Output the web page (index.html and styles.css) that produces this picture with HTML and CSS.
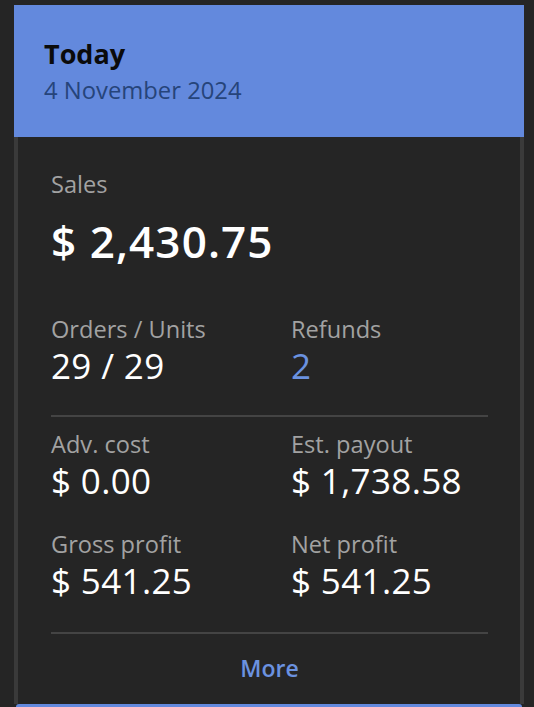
FILE: index.html
```html
<!DOCTYPE html>
<html lang="en">
<head>
<meta charset="utf-8">
<title>Today</title>
<link rel="stylesheet" href="styles.css">
</head>
<body>
<div class="list">
  <section class="card">
    <header class="card-head">
      <div class="title">Today</div>
      <div class="date">4 November 2024</div>
    </header>
    <div class="card-body">
      <div class="label">Sales</div>
      <div class="big">$ 2,430.75</div>
      <div class="grid first">
        <div class="stat">
          <div class="label">Orders / Units</div>
          <div class="value">29 / 29</div>
        </div>
        <div class="stat">
          <div class="label">Refunds</div>
          <div class="value link">2</div>
        </div>
      </div>
      <div class="divider"></div>
      <div class="grid second">
        <div class="stat">
          <div class="label">Adv. cost</div>
          <div class="value">$ 0.00</div>
        </div>
        <div class="stat">
          <div class="label">Est. payout</div>
          <div class="value">$ 1,738.58</div>
        </div>
        <div class="stat">
          <div class="label">Gross profit</div>
          <div class="value">$ 541.25</div>
        </div>
        <div class="stat">
          <div class="label">Net profit</div>
          <div class="value">$ 541.25</div>
        </div>
      </div>
      <div class="divider lower"></div>
      <div class="more">More</div>
    </div>
  </section>
  <section class="card next">
    <header class="card-head"></header>
  </section>
</div>
</body>
</html>
```
FILE: styles.css
```css
html, body {
  margin: 0;
  padding: 0;
  background: #252525;
  font-family: "Open Sans", "Noto Sans", sans-serif;
  overflow: hidden;
}
.list {
  padding: 5px 10px 0 14px;
}
.card-head {
  background: #6389dd;
  padding: 33px 30px 33px;
}
.title {
  font-size: 27px;
  line-height: 32px;
  font-weight: 700;
  color: #0b0b0b;
}
.date {
  font-size: 23.8px;
  line-height: 28px;
  margin-top: 6px;
  color: #26447a;
}
.card-body {
  border-left: 4px solid #3a3a3a;
  border-right: 4px solid #3a3a3a;
  padding: 33px 32px 22px 33px;
}
.label {
  font-size: 23.6px;
  line-height: 28px;
  color: #a2a2a2;
}
.big {
  font-size: 44px;
  line-height: 50px;
  font-weight: 600;
  letter-spacing: 1.1px;
  color: #ffffff;
  margin-top: 18px;
}
.grid {
  display: grid;
  grid-template-columns: 240px 1fr;
  row-gap: 26px;
}
.grid.first {
  margin-top: 48px;
}
.grid.second {
  margin-top: 12px;
}
.stat .label {
  line-height: 30px;
}
.value {
  font-size: 35px;
  line-height: 44px;
  letter-spacing: 0.35px;
  color: #ffffff;
}
.value.link {
  color: #6b92e0;
}
.divider {
  height: 2px;
  background: #444444;
  margin-top: 27px;
}
.divider.lower {
  margin-top: 29px;
}
.more {
  margin-top: 20px;
  text-align: center;
  font-size: 23px;
  line-height: 28px;
  font-weight: 600;
  color: #6b92e0;
}
.card.next .card-head {
  margin: 0 2px;
  height: 40px;
  padding: 0;
  border-radius: 3px 3px 0 0;
}
```
